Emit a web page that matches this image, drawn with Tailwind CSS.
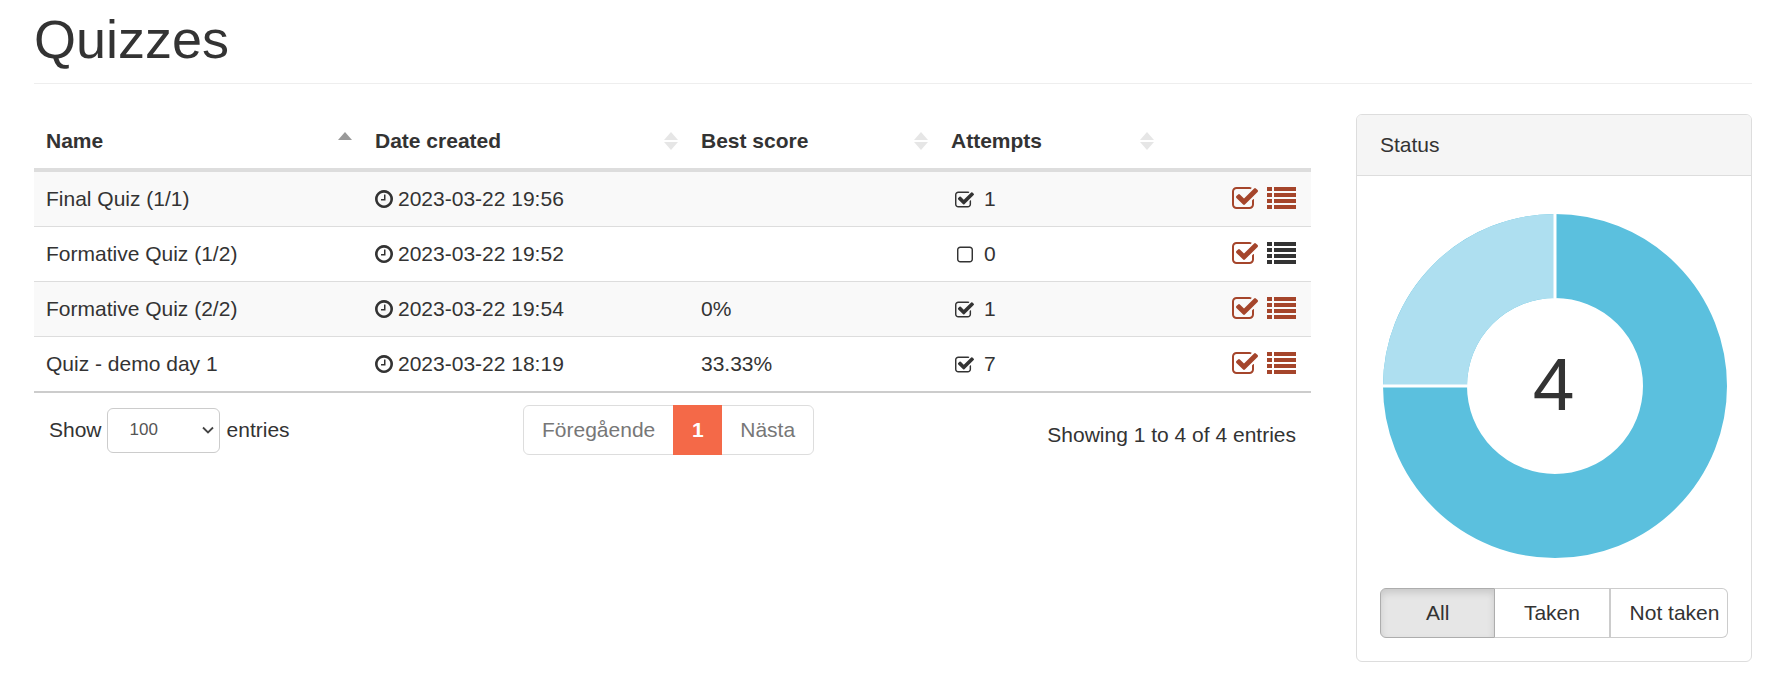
<!DOCTYPE html>
<html lang="sv">
<head>
    <meta charset="UTF-8">
    <meta name="viewport" content="width=device-width, initial-scale=1.0">
    <title>Quizzes</title>
    <script src="https://cdn.jsdelivr.net/npm/@tailwindcss/browser@4"></script>
</head>
<body class="bg-white text-[#333] text-[21px] leading-[30px] font-['Liberation_Sans',Arial,sans-serif]">
    <div class="pl-[34px] pr-[15px]">
        <header class="h-[84px] pt-[10px] border-b border-[#eee]">
            <h1 class="text-[54px] leading-[59px] font-normal">Quizzes</h1>
        </header>

        <div class="flex gap-[45px] mt-[30px] items-start">
            <!-- quiz table -->
            <div class="w-[1277px] shrink-0">
                <table class="w-full table-fixed border-separate border-spacing-0">
                    <colgroup>
                        <col class="w-[329px]">
                        <col class="w-[326px]">
                        <col class="w-[250px]">
                        <col class="w-[226px]">
                        <col class="w-[146px]">
                    </colgroup>
                    <thead>
                        <tr class="h-[58px] text-left">
                            <th class="border-b-4 border-[#ddd] pl-[12px] pr-[11px]">
                                <div class="flex items-center justify-between">Name
                                    <svg width="14" height="18" viewBox="0 0 14 18"><path d="M7 0 14 8H0z" fill="#999"/></svg>
                                </div>
                            </th>
                            <th class="border-b-4 border-[#ddd] pl-[12px] pr-[11px]">
                                <div class="flex items-center justify-between">Date created
                                    <svg width="14" height="18" viewBox="0 0 14 18"><path d="M7 0 14 8H0z" fill="#e6e6e6"/><path d="M7 18 14 10H0z" fill="#e6e6e6"/></svg>
                                </div>
                            </th>
                            <th class="border-b-4 border-[#ddd] pl-[12px] pr-[11px]">
                                <div class="flex items-center justify-between">Best score
                                    <svg width="14" height="18" viewBox="0 0 14 18"><path d="M7 0 14 8H0z" fill="#e6e6e6"/><path d="M7 18 14 10H0z" fill="#e6e6e6"/></svg>
                                </div>
                            </th>
                            <th class="border-b-4 border-[#ddd] pl-[12px] pr-[11px]">
                                <div class="flex items-center justify-between">Attempts
                                    <svg width="14" height="18" viewBox="0 0 14 18"><path d="M7 0 14 8H0z" fill="#e6e6e6"/><path d="M7 18 14 10H0z" fill="#e6e6e6"/></svg>
                                </div>
                            </th>
                            <th class="border-b-4 border-[#ddd]"></th>
                        </tr>
                    </thead>
                    <tbody>
                        <tr class="h-[55px] bg-[#f9f9f9]">
                            <td class="border-b border-[#ddd] pl-[12px]">Final Quiz (1/1)</td>
                            <td class="border-b border-[#ddd] pl-[12px]">
                                <div class="flex items-center gap-[5px]">
                                    <svg class="w-[18px] h-[18px] fill-[#333]" fill-rule="evenodd" viewBox="128 128 1536 1536"><path d="M1024 544v448q0 14-9 23t-23 9h-320q-14 0-23-9t-9-23v-64q0-14 9-23t23-9h224v-352q0-14 9-23t23-9h64q14 0 23 9t9 23zm416 352q0-148-73-273t-198-198-273-73-273 73-198 198-73 273 73 273 198 198 273 73 273-73 198-198 73-273zm224 0q0-209-103-385.5t-279.5-279.5-385.5-103-385.5 103-279.5 279.5-103 385.5 103 385.5 279.5 279.5 385.5 103 385.5-103 279.5-279.5 103-385.5z"/></svg>
                                    2023-03-22 19:56
                                </div>
                            </td>
                            <td class="border-b border-[#ddd] pl-[12px]"></td>
                            <td class="border-b border-[#ddd] pl-[16px]">
                                <div class="flex items-center gap-[10px]">
                                    <svg class="w-[19px] h-[17px] fill-[#333]" viewBox="64 128 1664 1408"><path d="M1472 930v318q0 119-84.5 203.5t-203.5 84.5h-832q-119 0-203.5-84.5t-84.5-203.5v-832q0-119 84.5-203.5t203.5-84.5h832q63 0 117 25 15 7 18 23 3 17-9 29l-49 49q-10 10-23 10-3 0-9-2-23-6-45-6h-832q-66 0-113 47t-47 113v832q0 66 47 113t113 47h832q66 0 113-47t47-113v-254q0-13 9-22l64-64q10-10 23-10 6 0 12 3 20 8 20 29zm231-489l-814 814q-24 24-57 24t-57-24l-430-430q-24-24-24-57t24-57l110-110q24-24 57-24t57 24l263 263 647-647q24-24 57-24t57 24l110 110q24 24 24 57t-24 57z"/></svg>
                                    1
                                </div>
                            </td>
                            <td class="border-b border-[#ddd] pr-[15px] pb-[2px]">
                                <div class="flex items-center justify-end gap-[9px]">
                                    <svg class="w-[26px] h-[22px] fill-[#a5452b]" viewBox="64 128 1664 1408"><path d="M1472 930v318q0 119-84.5 203.5t-203.5 84.5h-832q-119 0-203.5-84.5t-84.5-203.5v-832q0-119 84.5-203.5t203.5-84.5h832q63 0 117 25 15 7 18 23 3 17-9 29l-49 49q-10 10-23 10-3 0-9-2-23-6-45-6h-832q-66 0-113 47t-47 113v832q0 66 47 113t113 47h832q66 0 113-47t47-113v-254q0-13 9-22l64-64q10-10 23-10 6 0 12 3 20 8 20 29zm231-489l-814 814q-24 24-57 24t-57-24l-430-430q-24-24-24-57t24-57l110-110q24-24 57-24t57 24l263 263 647-647q24-24 57-24t57 24l110 110q24 24 24 57t-24 57z"/></svg>
                                    <svg class="w-[29px] h-[22px] fill-[#a5452b]" viewBox="0 0 29 22"><path d="M0 0h5v4H0zM7 0h22v4H7zM0 6h5v4H0zM7 6h22v4H7zM0 12h5v4H0zM7 12h22v4H7zM0 18h5v4H0zM7 18h22v4H7z"/></svg>
                                </div>
                            </td>
                        </tr>
                        <tr class="h-[55px]">
                            <td class="border-b border-[#ddd] pl-[12px]">Formative Quiz (1/2)</td>
                            <td class="border-b border-[#ddd] pl-[12px]">
                                <div class="flex items-center gap-[5px]">
                                    <svg class="w-[18px] h-[18px] fill-[#333]" fill-rule="evenodd" viewBox="128 128 1536 1536"><path d="M1024 544v448q0 14-9 23t-23 9h-320q-14 0-23-9t-9-23v-64q0-14 9-23t23-9h224v-352q0-14 9-23t23-9h64q14 0 23 9t9 23zm416 352q0-148-73-273t-198-198-273-73-273 73-198 198-73 273 73 273 198 198 273 73 273-73 198-198 73-273zm224 0q0-209-103-385.5t-279.5-279.5-385.5-103-385.5 103-279.5 279.5-103 385.5 103 385.5 279.5 279.5 385.5 103 385.5-103 279.5-279.5 103-385.5z"/></svg>
                                    2023-03-22 19:52
                                </div>
                            </td>
                            <td class="border-b border-[#ddd] pl-[12px]"></td>
                            <td class="border-b border-[#ddd] pl-[18px]">
                                <div class="flex items-center gap-[11px]">
                                    <svg class="w-[16px] h-[17px] fill-[#333]" viewBox="0 128 1408 1408"><path d="M1120 256h-832q-66 0-113 47t-47 113v832q0 66 47 113t113 47h832q66 0 113-47t47-113v-832q0-66-47-113t-113-47zm288 160v832q0 119-84.5 203.5t-203.5 84.5h-832q-119 0-203.5-84.5t-84.5-203.5v-832q0-119 84.5-203.5t203.5-84.5h832q119 0 203.5 84.5t84.5 203.5z"/></svg>
                                    0
                                </div>
                            </td>
                            <td class="border-b border-[#ddd] pr-[15px] pb-[2px]">
                                <div class="flex items-center justify-end gap-[9px]">
                                    <svg class="w-[26px] h-[22px] fill-[#a5452b]" viewBox="64 128 1664 1408"><path d="M1472 930v318q0 119-84.5 203.5t-203.5 84.5h-832q-119 0-203.5-84.5t-84.5-203.5v-832q0-119 84.5-203.5t203.5-84.5h832q63 0 117 25 15 7 18 23 3 17-9 29l-49 49q-10 10-23 10-3 0-9-2-23-6-45-6h-832q-66 0-113 47t-47 113v832q0 66 47 113t113 47h832q66 0 113-47t47-113v-254q0-13 9-22l64-64q10-10 23-10 6 0 12 3 20 8 20 29zm231-489l-814 814q-24 24-57 24t-57-24l-430-430q-24-24-24-57t24-57l110-110q24-24 57-24t57 24l263 263 647-647q24-24 57-24t57 24l110 110q24 24 24 57t-24 57z"/></svg>
                                    <svg class="w-[29px] h-[22px] fill-[#333]" viewBox="0 0 29 22"><path d="M0 0h5v4H0zM7 0h22v4H7zM0 6h5v4H0zM7 6h22v4H7zM0 12h5v4H0zM7 12h22v4H7zM0 18h5v4H0zM7 18h22v4H7z"/></svg>
                                </div>
                            </td>
                        </tr>
                        <tr class="h-[55px] bg-[#f9f9f9]">
                            <td class="border-b border-[#ddd] pl-[12px]">Formative Quiz (2/2)</td>
                            <td class="border-b border-[#ddd] pl-[12px]">
                                <div class="flex items-center gap-[5px]">
                                    <svg class="w-[18px] h-[18px] fill-[#333]" fill-rule="evenodd" viewBox="128 128 1536 1536"><path d="M1024 544v448q0 14-9 23t-23 9h-320q-14 0-23-9t-9-23v-64q0-14 9-23t23-9h224v-352q0-14 9-23t23-9h64q14 0 23 9t9 23zm416 352q0-148-73-273t-198-198-273-73-273 73-198 198-73 273 73 273 198 198 273 73 273-73 198-198 73-273zm224 0q0-209-103-385.5t-279.5-279.5-385.5-103-385.5 103-279.5 279.5-103 385.5 103 385.5 279.5 279.5 385.5 103 385.5-103 279.5-279.5 103-385.5z"/></svg>
                                    2023-03-22 19:54
                                </div>
                            </td>
                            <td class="border-b border-[#ddd] pl-[12px]">0%</td>
                            <td class="border-b border-[#ddd] pl-[16px]">
                                <div class="flex items-center gap-[10px]">
                                    <svg class="w-[19px] h-[17px] fill-[#333]" viewBox="64 128 1664 1408"><path d="M1472 930v318q0 119-84.5 203.5t-203.5 84.5h-832q-119 0-203.5-84.5t-84.5-203.5v-832q0-119 84.5-203.5t203.5-84.5h832q63 0 117 25 15 7 18 23 3 17-9 29l-49 49q-10 10-23 10-3 0-9-2-23-6-45-6h-832q-66 0-113 47t-47 113v832q0 66 47 113t113 47h832q66 0 113-47t47-113v-254q0-13 9-22l64-64q10-10 23-10 6 0 12 3 20 8 20 29zm231-489l-814 814q-24 24-57 24t-57-24l-430-430q-24-24-24-57t24-57l110-110q24-24 57-24t57 24l263 263 647-647q24-24 57-24t57 24l110 110q24 24 24 57t-24 57z"/></svg>
                                    1
                                </div>
                            </td>
                            <td class="border-b border-[#ddd] pr-[15px] pb-[2px]">
                                <div class="flex items-center justify-end gap-[9px]">
                                    <svg class="w-[26px] h-[22px] fill-[#a5452b]" viewBox="64 128 1664 1408"><path d="M1472 930v318q0 119-84.5 203.5t-203.5 84.5h-832q-119 0-203.5-84.5t-84.5-203.5v-832q0-119 84.5-203.5t203.5-84.5h832q63 0 117 25 15 7 18 23 3 17-9 29l-49 49q-10 10-23 10-3 0-9-2-23-6-45-6h-832q-66 0-113 47t-47 113v832q0 66 47 113t113 47h832q66 0 113-47t47-113v-254q0-13 9-22l64-64q10-10 23-10 6 0 12 3 20 8 20 29zm231-489l-814 814q-24 24-57 24t-57-24l-430-430q-24-24-24-57t24-57l110-110q24-24 57-24t57 24l263 263 647-647q24-24 57-24t57 24l110 110q24 24 24 57t-24 57z"/></svg>
                                    <svg class="w-[29px] h-[22px] fill-[#a5452b]" viewBox="0 0 29 22"><path d="M0 0h5v4H0zM7 0h22v4H7zM0 6h5v4H0zM7 6h22v4H7zM0 12h5v4H0zM7 12h22v4H7zM0 18h5v4H0zM7 18h22v4H7z"/></svg>
                                </div>
                            </td>
                        </tr>
                        <tr class="h-[56px]">
                            <td class="border-b-2 border-[#ccc] pl-[12px]">Quiz - demo day 1</td>
                            <td class="border-b-2 border-[#ccc] pl-[12px]">
                                <div class="flex items-center gap-[5px]">
                                    <svg class="w-[18px] h-[18px] fill-[#333]" fill-rule="evenodd" viewBox="128 128 1536 1536"><path d="M1024 544v448q0 14-9 23t-23 9h-320q-14 0-23-9t-9-23v-64q0-14 9-23t23-9h224v-352q0-14 9-23t23-9h64q14 0 23 9t9 23zm416 352q0-148-73-273t-198-198-273-73-273 73-198 198-73 273 73 273 198 198 273 73 273-73 198-198 73-273zm224 0q0-209-103-385.5t-279.5-279.5-385.5-103-385.5 103-279.5 279.5-103 385.5 103 385.5 279.5 279.5 385.5 103 385.5-103 279.5-279.5 103-385.5z"/></svg>
                                    2023-03-22 18:19
                                </div>
                            </td>
                            <td class="border-b-2 border-[#ccc] pl-[12px]">33.33%</td>
                            <td class="border-b-2 border-[#ccc] pl-[16px]">
                                <div class="flex items-center gap-[10px]">
                                    <svg class="w-[19px] h-[17px] fill-[#333]" viewBox="64 128 1664 1408"><path d="M1472 930v318q0 119-84.5 203.5t-203.5 84.5h-832q-119 0-203.5-84.5t-84.5-203.5v-832q0-119 84.5-203.5t203.5-84.5h832q63 0 117 25 15 7 18 23 3 17-9 29l-49 49q-10 10-23 10-3 0-9-2-23-6-45-6h-832q-66 0-113 47t-47 113v832q0 66 47 113t113 47h832q66 0 113-47t47-113v-254q0-13 9-22l64-64q10-10 23-10 6 0 12 3 20 8 20 29zm231-489l-814 814q-24 24-57 24t-57-24l-430-430q-24-24-24-57t24-57l110-110q24-24 57-24t57 24l263 263 647-647q24-24 57-24t57 24l110 110q24 24 24 57t-24 57z"/></svg>
                                    7
                                </div>
                            </td>
                            <td class="border-b-2 border-[#ccc] pr-[15px] pb-[2px]">
                                <div class="flex items-center justify-end gap-[9px]">
                                    <svg class="w-[26px] h-[22px] fill-[#a5452b]" viewBox="64 128 1664 1408"><path d="M1472 930v318q0 119-84.5 203.5t-203.5 84.5h-832q-119 0-203.5-84.5t-84.5-203.5v-832q0-119 84.5-203.5t203.5-84.5h832q63 0 117 25 15 7 18 23 3 17-9 29l-49 49q-10 10-23 10-3 0-9-2-23-6-45-6h-832q-66 0-113 47t-47 113v832q0 66 47 113t113 47h832q66 0 113-47t47-113v-254q0-13 9-22l64-64q10-10 23-10 6 0 12 3 20 8 20 29zm231-489l-814 814q-24 24-57 24t-57-24l-430-430q-24-24-24-57t24-57l110-110q24-24 57-24t57 24l263 263 647-647q24-24 57-24t57 24l110 110q24 24 24 57t-24 57z"/></svg>
                                    <svg class="w-[29px] h-[22px] fill-[#a5452b]" viewBox="0 0 29 22"><path d="M0 0h5v4H0zM7 0h22v4H7zM0 6h5v4H0zM7 6h22v4H7zM0 12h5v4H0zM7 12h22v4H7zM0 18h5v4H0zM7 18h22v4H7z"/></svg>
                                </div>
                            </td>
                        </tr>
                    </tbody>
                </table>

                <!-- length, paging, info -->
                <div class="flex mt-[12px] pl-[15px] pr-[15px]">
                    <div class="w-[474px] shrink-0 flex items-center gap-[5px] h-[50px]">
                        Show
                        <div class="relative w-[113px] h-[45px]">
                            <select class="appearance-none w-full h-full pl-[22px] bg-white border border-[#ccc] rounded-[6px] text-[17px] text-[#555]">
                                <option>100</option>
                            </select>
                            <svg class="absolute right-[6px] top-[18px] w-[12px] h-[8px] pointer-events-none" viewBox="0 0 12 8"><path d="M1 1.5 6 6.5 11 1.5" fill="none" stroke="#444" stroke-width="1.8"/></svg>
                        </div>
                        <span class="ml-[2px]">entries</span>
                    </div>
                    <nav class="flex h-[50px] border border-[#ddd] rounded-[6px] text-[#777]">
                        <a class="px-[18px] flex items-center">Föregående</a>
                        <a class="w-[49px] -my-[1px] flex items-center justify-center bg-[#f46948] text-white font-bold">1</a>
                        <a class="px-[18px] flex items-center">Nästa</a>
                    </nav>
                    <div class="ml-auto h-[50px] pt-[15px]">Showing 1 to 4 of 4 entries</div>
                </div>
            </div>

            <!-- status panel -->
            <section class="w-[396px] h-[548px] shrink-0 border border-[#ddd] rounded-[6px] overflow-hidden">
                <h2 class="h-[61px] px-[23px] flex items-center bg-[#f5f5f5] border-b border-[#ddd] text-[21px] font-normal">Status</h2>
                <div class="relative w-[350px] h-[350px] ml-[23px] mt-[35px]">
                    <svg class="w-[350px] h-[350px]" viewBox="0 0 350 350">
                        <circle cx="175" cy="175" r="130" fill="none" stroke="#5bc0de" stroke-width="84"/>
                        <path d="M175 3A172 172 0 0 0 3 175H87A88 88 0 0 1 175 87Z" fill="#aedff0"/>
                        <path d="M175 3V87M3 175H87" stroke="#fff" stroke-width="3"/>
                    </svg>
                    <span class="absolute inset-0 pr-[3px] pb-[4px] flex items-center justify-center text-[75px] leading-none">4</span>
                </div>
                <div class="flex h-[50px] mx-[23px] mt-[27px] text-[21px]">
                    <button class="w-[116px] bg-[#e6e6e6] border border-[#adadad] rounded-l-[6px] shadow-[inset_0_4px_7px_rgba(0,0,0,0.125)]">All</button>
                    <button class="w-[116px] bg-white border-y border-r-2 border-[#ccc]">Taken</button>
                    <button class="w-[118px] pl-[19px] text-left whitespace-nowrap bg-white border-y border-r border-[#ccc] rounded-r-[6px]">Not taken</button>
                </div>
            </section>
        </div>
    </div>
</body>
</html>
